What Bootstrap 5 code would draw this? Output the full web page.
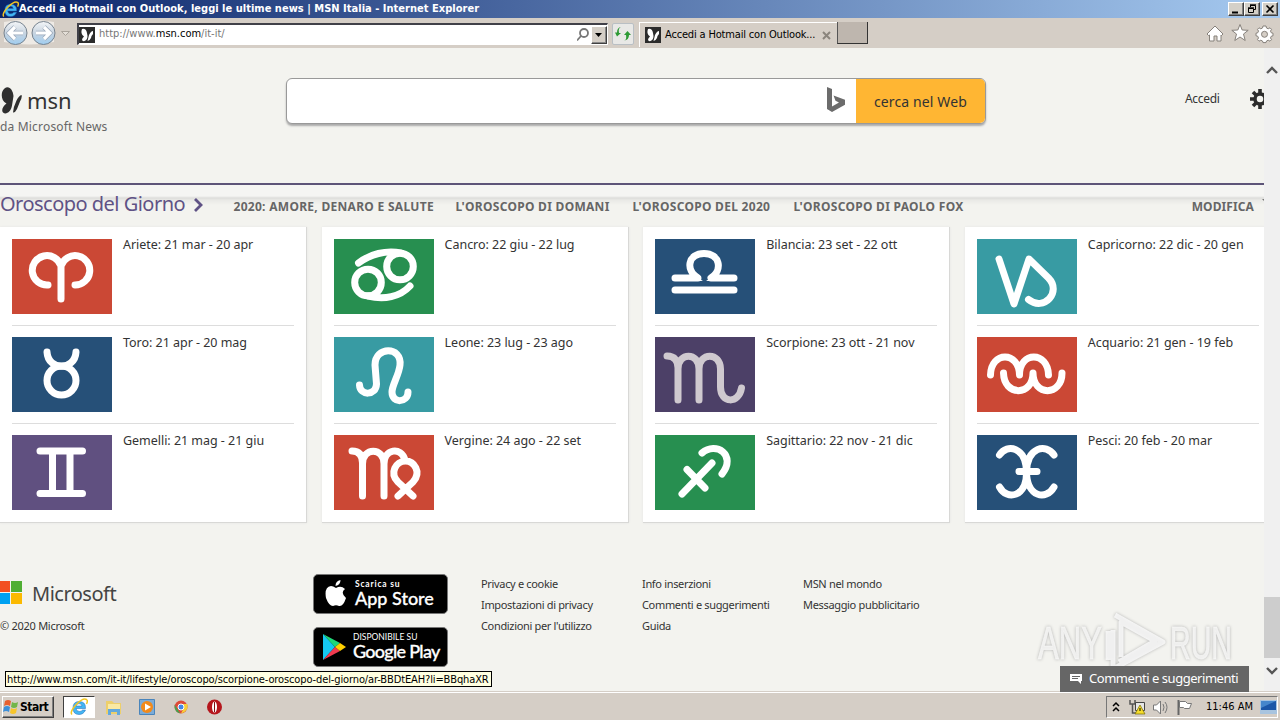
<!DOCTYPE html>
<html lang="it">
<head>
<meta charset="utf-8">
<meta name="viewport" content="width=device-width, initial-scale=1">
<title>Accedi a Hotmail con Outlook, leggi le ultime news | MSN Italia</title>
<link href="https://cdn.jsdelivr.net/npm/bootstrap@5.3.0/dist/css/bootstrap.min.css" rel="stylesheet">
<style>
html,body{width:1280px;height:720px;overflow:hidden}
body{font-family:"Noto Sans","Open Sans",sans-serif;color:#333;background:#f3f3ef;white-space:nowrap}
svg{display:block;flex:none}
.ui{font-family:"DejaVu Sans Condensed","DejaVu Sans",sans-serif;font-stretch:condensed;font-size:11px;color:#000}
.titlebar{height:18px;background:linear-gradient(90deg,#0a246a,#a6caf0);color:#fff;line-height:18px;padding:0 2px}
.titletext{letter-spacing:.02px}
.winbtn{width:16px;height:14px;background:#d4d0c8;border:1px solid;border-color:#fff #404040 #404040 #fff;box-shadow:inset -1px -1px #808080}
.winclose{margin-left:2px}
.toolbar{height:30px;background:#d5cec6}
.addr{width:531px;height:22px;background:#fff;border:1px solid #808080;border-top:2px solid #404048;border-left:2px solid #404048;border-right-color:#fff;border-bottom-color:#fff;margin-top:5px}
.dropbtn{width:16px;height:18px;background:#d4cec6;border:1px solid;border-color:#fff #404040 #404040 #fff;box-shadow:inset -1px -1px #888}
.refresh{width:22px;height:22px;background:#e8e8e6;border:1px solid #b9bfc4;border-radius:2px;margin:5px 0 0 4px}
.tabitem{width:200px;height:25px;border-left:1px solid #fff;border-top:1px solid #fff;margin:4px 0 0 5px}
.tabtext{letter-spacing:-.17px;margin-left:4px}
.newtab{width:31px;height:22px;background:#beb6ae;border:1px solid #333;border-top:0;border-left-color:#555;margin:4px 0 0 -2px}
.viewport{height:644px}
.page{width:1264px;height:644px;overflow:hidden;background:#f3f3ef}
.scroller{width:16px;background:#f0f0f0}
.thumb{height:61px;background:#cdcdcd;margin-top:519px}
.masthead{height:135px;padding-top:30px}
.masthead>*{flex:none}
.brand{width:286px;padding-top:8px}
.brandname{font-size:22px;line-height:28px;color:#333;margin-left:5px}
.brandsub{font-size:12px;line-height:16px;color:#666;margin-top:5px;letter-spacing:.18px}
.searchbox{width:700px;height:46px;background:#fff;border:1px solid #999;border-radius:6px;box-shadow:0 2px 2px #aaa;overflow:hidden}
.searchbtn{width:129px;background:#ffb633;font-size:14px;color:#333;border:0;padding:0;letter-spacing:.12px}
.accedi{font-size:12px;line-height:16px;margin-left:199px;margin-top:13px;width:65px;letter-spacing:-.3px}
.sechead{height:44px;border-top:2px solid #5d5478;padding-top:7px;background:linear-gradient(#f5f5f3 0,#f5f5f3 11px,#dddddb 13px,#e9e9e6 15px,#f3f3ef 20px)}
.sectitle{font-size:20px;line-height:24px;color:#5f5285;width:193px;letter-spacing:-.52px}
.secnav{font-size:12px;font-weight:700;line-height:16px;color:#666;padding-top:7px;letter-spacing:.29px}
.secnav .modify{margin-right:8px;letter-spacing:.1px}
.signs{display:grid;grid-template-columns:repeat(4,307px);column-gap:14.6px;height:295px}
.signcard{background:#fff;border-right:1px solid #d8d8d6;border-bottom:1px solid #d8d8d6;box-shadow:0 0 2px #e4e4e2;padding:12px 12px 0;height:296px}
.signrow{height:98px}
.signrow>div{font-size:12.5px;line-height:16px;margin:-2px 0 0 11px;letter-spacing:-.03px}
.signrow+.signrow{position:relative}
.signrow+.signrow::before{content:"";position:absolute;top:-12px;left:0;width:282px;height:1px;background:#ddd}
.glyph{fill:none;stroke:#fff;stroke-width:7;stroke-linecap:round;stroke-linejoin:round}
.glyph.dim{stroke:#cfc9cf}
.foot{padding-top:52px;font-size:11px}
.foot>*{flex:none}
.msname{font-size:20px;margin-left:10px;line-height:26px;color:#444;letter-spacing:-.5px}
.copy{margin-top:11px;line-height:16px;letter-spacing:-.27px}
.foot .links{line-height:21px;margin-top:-1px;letter-spacing:-.33px}
.storebadge{width:135px;height:40px;background:#000;border:1px solid #777;border-radius:5px;color:#fff}
.storebadge .tiny{font-size:8.5px;line-height:9px;font-family:Lato,sans-serif}
.storebadge .spaced{font-weight:700;letter-spacing:.8px}
.storebadge .big{font-family:Lato,sans-serif;font-weight:500;font-size:18px;line-height:19px;-webkit-text-stroke:.3px #fff}
.storebadge .tight{letter-spacing:-.72px}
.statusurl{position:absolute;left:5px;top:671px;width:487px;height:16px;border:1px solid #000;background:#ffffe1;line-height:15px;padding-left:1px;letter-spacing:-.12px}
.feedback{position:absolute;left:1060px;top:666px;width:189px;height:26px;background:#666;color:#fff;font-size:13px;letter-spacing:-.46px}
.watermark{position:absolute;left:1030px;top:600px;filter:drop-shadow(0 0 1.5px #aaa)}
.taskbar{height:28px;background:#d5cec6;border-top:1px solid #fff;box-shadow:0 -1px #d5cec6}
.startbtn{width:52px;height:22px;background:#d5cec6;border:1px solid;border-color:#fff #404040 #404040 #fff;box-shadow:inset -1px -1px #808080;font-weight:700;font-size:12px;letter-spacing:-.5px;margin-left:2px}
.activeapp{width:32px;height:22px;background:#fff;border:1px solid;border-color:#404040 #fff #fff #404040;margin-left:9px}
.tray{width:172px;height:22px;border:1px solid;border-color:#777 #fff #fff #777;margin-right:2px}
.clock{margin-left:11px;padding-top:2px}
</style>
</head>
<body class="d-flex flex-column position-relative">
<svg width="0" height="0" class="position-absolute">
<defs>
<symbol id="ie" viewBox="0 0 18 18"><path d="M15.500 10.500H6q.5 3 3.500 3 2 0 3-1.500h3q-2 4.500-6.500 4.500-6 0-6-6.500t6-6.500q7 0 6.500 7M6 8h6q-.3-2.400-3-2.400T6 8" fill="#42b6f3" stroke="#1d65b5" stroke-width=".5" fill-rule="evenodd"/><path d="M2 16.500C-2 13 12-1 16.500 1.500 18 2.500 17 5 16.500 6" fill="none" stroke="#f3c622" stroke-width="1.500"/></symbol>
<symbol id="fly" viewBox="0 0 16 16"><path fill="#2b2b2b" d="M0 0h16v16H0z"/><path fill="#fff" d="M3 2q4-1 5 4l.5 3q0 4-3 5-2 .5-2.500-1 0-2 2-3.500Q1 7 3 2M14 4q-2 0-4 4l-1.500 6q2 0 3.500-3 0-2 2-4z"/></symbol>
<linearGradient id="orb" x2="0" y2="1"><stop stop-color="#f4f6f8"/><stop offset=".5" stop-color="#c8d4e0"/><stop offset="1" stop-color="#9fcdf0"/></linearGradient>
</defs>
</svg>

<header class="titlebar ui d-flex align-items-center fw-bold">
  <svg width="17" height="17"><use href="#ie"/></svg>
  <span class="titletext">Accedi a Hotmail con Outlook, leggi le ultime news | MSN Italia - Internet Explorer</span>
  <div class="d-flex ms-auto">
    <div class="winbtn"><svg width="14" height="12"><path d="M3 9.500h6" stroke="#000" stroke-width="2"/></svg></div>
    <div class="winbtn"><svg width="14" height="12" fill="none" stroke="#000"><path d="M5 2.500h5.500v4H9M5.500 2v2M3 5.500h5.500v4h-5V5M5 1.800h6M3 4.800h6"/></svg></div>
    <div class="winbtn winclose"><svg width="14" height="12" stroke="#000" stroke-width="1.600"><path d="M3.500 2.500l7 7M10.500 2.500l-7 7"/></svg></div>
  </div>
</header>

<div class="toolbar ui d-flex align-items-start">
  <svg width="77" height="30"><path d="M4 4q24-5 50 0v20q-24 5-50 0z" fill="#eeeae5"/><g fill="url(#orb)" stroke="#77838f"><circle cx="15.500" cy="15" r="11.500"/><circle cx="43.500" cy="15" r="11.500"/></g><g stroke="#9aa8ba" stroke-width="4.600" fill="none"><path d="M8.500 15H23M15 9l-6 6 6 6M36 15h14.500M44 9l6 6-6 6"/></g><g stroke="#fff" stroke-width="3.200" fill="none"><path d="M8.500 15H23M15 9l-6 6 6 6M36 15h14.500M44 9l6 6-6 6"/></g><path d="M61.500 13.500h8l-4 4z" fill="#e4dfd8" stroke="#aaa49c"/></svg>
  <div class="addr d-flex align-items-center">
    <svg width="16" height="16"><use href="#fly"/></svg>
    <span class="ms-1" style="color:#777">http://www.<span class="text-black">msn.com</span>/it-it/</span>
    <svg width="14" height="16" class="ms-auto" fill="none" stroke="#777" stroke-width="1.800"><circle cx="7" cy="6" r="4"/><path d="M4 9l-4 4.500"/></svg>
    <div class="dropbtn"><svg width="14" height="16"><path d="M3 6h7l-3.500 4z"/></svg></div>
  </div>
  <div class="refresh"><svg width="20" height="20" viewBox="0 0 20 20" fill="#2e9a35"><path d="M8 3q-3 1-2 6h2l-4 3.500L2 8.500h2q0-5 4-5.500M11 16.500q3-.5 2-5.500h-2l3.500-4L18 11h-2q0 5-5 5.500"/></svg></div>
  <div class="tabitem d-flex align-items-center">
    <svg width="16" height="16" style="margin-left:5px"><use href="#fly"/></svg>
    <span class="tabtext">Accedi a Hotmail con Outlook...</span>
    <svg width="9" height="9" class="ms-auto me-2" stroke="#8b857d" stroke-width="2"><path d="M1 1l7 7M8 1l-7 7"/></svg>
  </div>
  <div class="newtab"></div>
  <svg width="70" height="22" class="ms-auto me-1 mt-1" fill="#fff" stroke="#86817b"><path d="M1 12l8-8 8 8-1.500 1.500L15 13v6h-4v-5H8v5H3.500v-6l-1 .5zM34 2.500l2.200 5.500 6 .3-4.700 3.700 1.700 6.500-5.200-3.500-5.200 3.500 1.700-6.500-4.700-3.700 6-.3z"/><path d="M57 4h3l.5 2 1.700.8 1.800-1 1.500 1.500-1 1.800.8 1.700 1.700.4v2.600l-1.700.4-.8 1.700 1 1.800-1.500 1.500-1.800-1-1.700.8-.5 1.600h-3l-.5-1.600-1.700-.8-1.800 1-1.500-1.500 1-1.800-.8-1.700-1.700-.4v-2.600l1.700-.4.8-1.700-1-1.800 1.500-1.500 1.800 1 1.700-.8z"/><circle cx="58.500" cy="12.300" r="3" fill="#d5cec6"/></svg>
</div>

<div class="viewport d-flex">
<main class="page">
  <div class="masthead d-flex">
    <div class="brand">
      <div class="d-flex">
        <svg width="22" height="28" fill="#2f2f2f"><path d="M4.500 2.500C9-1 13 4 13.500 10L12 19.500C11 26 6 29 3 26.500 1 24 3 20 6.500 17.500 0 14 1 5 4.500 2.500M21.500 9q1 2-1.500 6.500l-3 7.500q-2 4-4 3.500.5-6 3.500-12 2.500-5 5-5.500"/></svg>
        <span class="brandname">msn</span>
      </div>
      <div class="brandsub">da Microsoft News</div>
    </div>
    <div class="searchbox d-flex">
      <svg width="20" height="26" viewBox="0 0 20 26" class="ms-auto mt-2" style="margin-right:10px"><path d="M1 0l5 2v17.500l7-4-3.500-1.700L7.500 8.500 19 12.800v5L6 25l-5-3z" fill="#6c6c6c"/></svg>
      <button class="searchbtn">cerca nel Web</button>
    </div>
    <span class="accedi">Accedi</span>
    <svg width="20" height="20" viewBox="-10 -10 20 20" style="margin-top:11px"><g stroke="#2c2c2c" stroke-width="3.600"><path d="M0-10V10M-10 0H10M-7-7L7 7M7-7L-7 7"/></g><circle r="5" fill="#f3f3ef" stroke="#2c2c2c" stroke-width="3.500"/></svg>
  </div>

  <div class="sechead d-flex">
    <div class="sectitle">Oroscopo del Giorno</div>
    <svg width="12" height="16" style="margin-top:5px" fill="none" stroke="#5f5285" stroke-width="2.800"><path d="M2 2l6 6-6 6"/></svg>
    <nav class="secnav d-flex flex-grow-1">
      <span style="margin-left:28.500px;width:222px">2020: AMORE, DENARO E SALUTE</span>
      <span style="width:177px">L'OROSCOPO DI DOMANI</span>
      <span style="width:161px">L'OROSCOPO DEL 2020</span>
      <span>L'OROSCOPO DI PAOLO FOX</span>
      <span class="ms-auto modify">MODIFICA</span>
      <svg width="2" height="8"><path d="M0 0h2v2z" fill="#777"/></svg>
    </nav>
  </div>

  <section class="signs">
    <article class="signcard">
      <div class="signrow d-flex"><svg width="100" height="75"><path fill="#cb4835" d="M0 0h100v75H0z"/><path class="glyph" d="M36 46A14.700 14.700 0 1 1 49 27V60M63 46A14.700 14.700 0 1 0 49 27"/></svg><div>Ariete: 21 mar - 20 apr</div></div>
      <div class="signrow d-flex"><svg width="100" height="75"><path fill="#265078" d="M0 0h100v75H0z"/><path class="glyph" d="M35 15C36 34 63 34 64 15"/><circle class="glyph" cx="49.500" cy="43.500" r="14.500"/></svg><div>Toro: 21 apr - 20 mag</div></div>
      <div class="signrow d-flex"><svg width="100" height="75"><path fill="#605080" d="M0 0h100v75H0z"/><path class="glyph" d="M28 16H70.500M28 58.500H70.500M40.500 16V58M58 16V58"/></svg><div>Gemelli: 21 mag - 21 giu</div></div>
    </article>
    <article class="signcard">
      <div class="signrow d-flex"><svg width="100" height="75"><path fill="#278f50" d="M0 0h100v75H0z"/><g class="glyph"><circle cx="34" cy="43.500" r="13.300"/><circle cx="66" cy="27.500" r="13.300"/><path d="M24.500 24C36 15 52 11 67 14M76 47C66 58 50 61 34 57"/></g></svg><div>Cancro: 22 giu - 22 lug</div></div>
      <div class="signrow d-flex"><svg width="100" height="75"><path fill="#389ba3" d="M0 0h100v75H0z"/><path class="glyph" d="M25.500 48C26 59 42 59 42.500 47L41 28C41 9 68 9 66 28C65 38 58 48 58 55C58 67 74 66 74 55"/></svg><div>Leone: 23 lug - 23 ago</div></div>
      <div class="signrow d-flex"><svg width="100" height="75"><path fill="#cb4835" d="M0 0h100v75H0z"/><path class="glyph" d="M18 16C25 16 28.500 20 28.500 28V61M28.500 29C28.500 12 50 12 50 29V61M50 29C50 14 67 11 71 25M64 61L79 47C88 37 80 26 71.500 26C62 26 55 38 64 47L79 61"/></svg><div>Vergine: 24 ago - 22 set</div></div>
    </article>
    <article class="signcard">
      <div class="signrow d-flex"><svg width="100" height="75"><path fill="#265078" d="M0 0h100v75H0z"/><path class="glyph" d="M20 39H43C30 31 33 14.500 49 14.500S68 31 56 39H79M20 51H79"/><path fill="#fff" d="M38 36l10 6H34zM60 36l-9 6h14z"/></svg><div>Bilancia: 23 set - 22 ott</div></div>
      <div class="signrow d-flex"><svg width="100" height="75"><path fill="#4c4067" d="M0 0h100v75H0z"/><path class="glyph dim" d="M12 19C20 19 23 24 23 31V63M23 32C23 15 44 15 44 32V63M44 32C44 15 65.500 15 65.500 32V50C65.500 67 84 67 86.500 51"/></svg><div>Scorpione: 23 ott - 21 nov</div></div>
      <div class="signrow d-flex"><svg width="100" height="75"><path fill="#278f50" d="M0 0h100v75H0z"/><path class="glyph" d="M27 59L57 28M32 34.500L50 53M47 18C61 6 82 20 67 39"/></svg><div>Sagittario: 22 nov - 21 dic</div></div>
    </article>
    <article class="signcard">
      <div class="signrow d-flex"><svg width="100" height="75"><path fill="#389ba3" d="M0 0h100v75H0z"/><path class="glyph" d="M22 20L37 65L52 20L71.500 39C85 53 67 73 51.500 60.500"/></svg><div>Capricorno: 22 dic - 20 gen</div></div>
      <div class="signrow d-flex"><svg width="100" height="75"><path fill="#cb4835" d="M0 0h100v75H0z"/><path class="glyph" d="M13.500 38C14 14 42 14 42.500 38C42.500 14 71 14 71.500 38M26.500 36C27 59.500 56 59.500 56 36C56 59.500 85 59.500 85 36"/></svg><div>Acquario: 21 gen - 19 feb</div></div>
      <div class="signrow d-flex"><svg width="100" height="75"><path fill="#265078" d="M0 0h100v75H0z"/><path class="glyph" d="M22.500 20C30 8 49 12 49.500 37C50 62 30 66 22.500 52M77 20C69 8 50 12 49.500 37C50 62 69 66 77 52M42 36.500H60"/></svg><div>Pesci: 20 feb - 20 mar</div></div>
    </article>
  </section>

  <footer class="foot d-flex">
    <div style="width:313px">
      <div class="d-flex" style="margin-top:7px;height:26px">
        <svg width="22" height="23"><path fill="#f25022" d="M0 0h10v11H0z"/><path fill="#4fae33" d="M11 0h11v11H11z"/><path fill="#00a1f1" d="M0 12h10v11H0z"/><path fill="#fbb900" d="M11 12h11v11H11z"/></svg>
        <span class="msname">Microsoft</span>
      </div>
      <div class="copy">© 2020 Microsoft</div>
    </div>
    <div class="d-flex flex-column" style="width:168px;gap:13px">
      <div class="storebadge d-flex align-items-center">
        <svg width="22" height="28" viewBox="0 0 22 28" fill="#fff" style="margin-left:11px"><path d="M11 8q5-3 9 1-5 4 1 9-3 9-7 8-3-1.500-6 0-4 0-7-8-2-11 5-12 2 0 5 2M10.500 6q0-5 5-6 0 5-5 6"/></svg>
        <div style="margin-left:8px"><div class="tiny spaced">Scarica su</div><div class="big">App Store</div></div>
      </div>
      <div class="storebadge d-flex align-items-center">
        <svg width="24" height="28" viewBox="0 0 24 28" style="margin-left:8px"><path fill="#15c8f2" d="M1 1v26l12-13z"/><path fill="#20d878" d="M1 1l17 9-5 4z"/><path fill="#ef3b50" d="M1 27l17-9-5-4z"/><path fill="#ffd000" d="M18 10l6 4-6 4-5-4z"/></svg>
        <div style="margin-left:7px"><div class="tiny">DISPONIBILE SU</div><div class="big tight">Google Play</div></div>
      </div>
    </div>
    <div class="links" style="width:161px">Privacy e cookie<br>Impostazioni di privacy<br>Condizioni per l'utilizzo</div>
    <div class="links" style="width:161px">Info inserzioni<br>Commenti e suggerimenti<br>Guida</div>
    <div class="links">MSN nel mondo<br>Messaggio pubblicitario</div>
  </footer>
</main>
<aside class="scroller d-flex flex-column align-items-center">
  <svg width="16" height="16" style="margin-top:14px" fill="none" stroke="#555" stroke-width="2.400"><path d="M3 11l5-5 5 5"/></svg>
  <div class="thumb w-100"></div>
  <svg width="16" height="16" style="margin-top:5px" fill="none" stroke="#555" stroke-width="2.400"><path d="M3 5l5 5 5-5"/></svg>
</aside>
</div>

<svg class="watermark" width="215" height="75" viewBox="0 0 215 75"><g fill="#f8f8f7" fill-opacity=".85" stroke="#f8f8f7" stroke-opacity=".7" font-family="'Liberation Sans',sans-serif" font-size="46"><text x="8" y="59" textLength="64" lengthAdjust="spacingAndGlyphs">ANY</text><text x="140" y="59" textLength="62" lengthAdjust="spacingAndGlyphs">RUN</text></g><g fill="none" stroke="#fafafa" stroke-opacity=".85" stroke-width="5" stroke-linejoin="round"><path d="M91 57V22l34 19-36 21M78 60V31M83 30v39l50-27-48-27"/></g></svg>
<div class="statusurl ui">http://www.msn.com/it-it/lifestyle/oroscopo/scorpione-oroscopo-del-giorno/ar-BBDtEAH?li=BBqhaXR</div>
<div class="feedback d-flex align-items-center"><svg width="12" height="10" style="margin-left:10px"><path d="M0 0h12v7h-1v3L8 7H0z" fill="#fff"/><path d="M2 2.500h8M2 4.500h6" stroke="#666"/></svg><span style="margin-left:7px">Commenti e suggerimenti</span></div>

<footer class="taskbar ui d-flex align-items-center mt-auto">
  <div class="startbtn d-flex align-items-center"><svg width="16" height="16" viewBox="0 0 16 16" class="ms-0"><path fill="#e7602f" d="M2 2q3-2 6 0L7 7Q4 5 1 7z"/><path fill="#73b64a" d="M9 3q3 2 6 0l-1 5q-3 2-6 0z"/><path fill="#3c8fd9" d="M1 8q3-2 6 0l-1 5q-3-2-6 0z"/><path fill="#f7c52b" d="M8 9q3 2 6 0l-1 5q-3 2-6 0z"/></svg><span style="margin-left:1px">Start</span></div>
  <div class="activeapp d-flex justify-content-center align-items-center"><svg width="18" height="18"><use href="#ie"/></svg></div>
  <svg width="130" height="20" viewBox="0 0 130 20" style="margin-left:10px"><path fill="#edcf6b" d="M1 4h6l2 2h7v11H1z"/><path fill="#fae9a3" d="M3 7h12v8H3z"/><path fill="#63a8dc" d="M3 18v-6h12v6h-3v-3H6v3z"/><path fill="#7cacd8" stroke="#4a85bb" d="M34.500 2.500h15v15h-15z"/><circle cx="42" cy="10" r="6" fill="#f28a1b"/><path fill="#fff" d="M40 6.500l6 3.500-6 3.500z"/><circle cx="76" cy="10" r="6.500" fill="#dd4b39"/><path fill="#40a652" d="M69.500 7.500l5 8 1 1Q69 15 69.500 7.500"/><path fill="#f7cf38" d="M76 7h6.500q1 8-6.500 9.500l3-6z"/><circle cx="76" cy="10" r="3" fill="#4387e7" stroke="#fff"/><circle cx="109.500" cy="10" r="7.500" fill="#b5161c"/><ellipse cx="109.500" cy="10" rx="2.500" ry="5.500" fill="#fff"/><path stroke="#801014" d="M109.500 5v10"/></svg>
  <div class="tray d-flex align-items-center ms-auto">
    <svg width="88" height="20" viewBox="0 0 88 20" fill="none"><path d="M6 9l3-3 3 3M6 14l3-3 3 3" stroke="#000" stroke-width="1.500"/><path d="M23 3v4h5V3M25.500 7v9h6" stroke="#555" stroke-width="1.500"/><path fill="#e6e6e6" stroke="#444" d="M28.500 5.500h9v8h-9z"/><path fill="#f5dc2c" stroke="#776a00" stroke-width=".7" d="M33 8l5 9H28z"/><path d="M33 11v3" stroke="#000"/><path fill="#fff" stroke="#777" d="M46.500 8h3l4-4v13l-4-4h-3z"/><path d="M56 7q2 3 0 7M58 5q4 5 0 11" stroke="#777"/><path d="M71.500 3v15" stroke="#666" stroke-width="2"/><path fill="#fff" stroke="#777" d="M72.500 4.500h6l2 2h4l-2 5h-5l-1-1h-4z"/></svg>
    <span class="clock">11:46 AM</span>
    <svg width="17" height="14" style="margin-left:7px"><path fill="#a8c4df" d="M0 0h17v14H0z"/><path fill="#1c57a8" d="M1 1h15v9H1z"/><path fill="#4687cc" d="M1 1h15L1 8z"/></svg>
  </div>
</footer>
</body>
</html>
